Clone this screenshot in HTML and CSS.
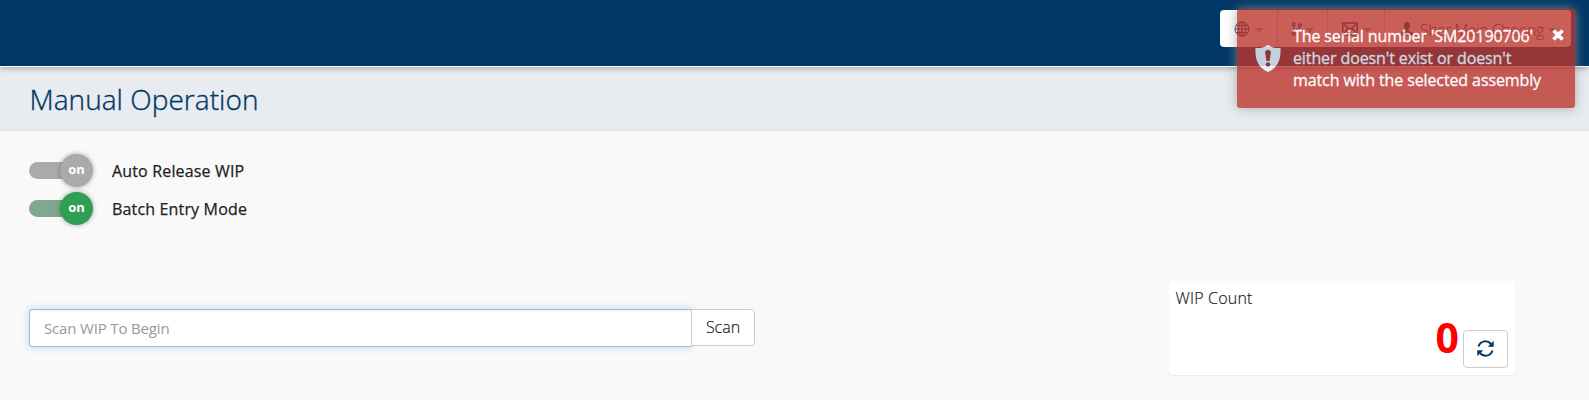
FILE: index.html
```html
<!DOCTYPE html>
<html lang="en">
<head>
<meta charset="utf-8">
<title>Manual Operation</title>
<link rel="stylesheet" href="styles.css">
</head>
<body>
<header class="topbar">
  <nav class="menu">
    <button class="menu-item globe"><svg width="16" height="16" viewBox="0 0 16 16" fill="none" stroke="currentColor" stroke-width="1"><circle cx="8" cy="8" r="7"/><ellipse cx="8" cy="8" rx="3.5" ry="7"/><path d="M8 1v14M1 8h14M2 4.5h12M2 11.5h12"/></svg><i class="caret"></i></button>
    <button class="menu-item branch"><svg width="12" height="14" viewBox="0 0 12 14" fill="none" stroke="currentColor" stroke-width="1.2"><circle cx="2.7" cy="2.3" r="1.4"/><circle cx="2.7" cy="11.7" r="1.4"/><circle cx="9" cy="3.3" r="1.4"/><path d="M2.700 4v6M9 5c0 3.500-6 1.500-6.300 5"/></svg><i class="caret"></i></button>
    <button class="menu-item mail"><svg width="16" height="14" viewBox="0 0 16 14" fill="none" stroke="currentColor" stroke-width="1.500"><rect x=".8" y="1" width="14.400" height="12"/><path d="M1 1.500l7 6 7-6M1 12.500l5-6M15 12.500l-5-6"/></svg><i class="caret"></i></button>
    <button class="menu-item user"><svg width="12" height="14" viewBox="0 0 12 14" fill="currentColor"><path d="M6 0C3.800 0 2.900 1.500 2.900 3.500c0 1.800.6 3.200 1.700 4v1.300L1.200 10.200C.4 10.600 0 11.500 0 13.500h12c0-2-.4-2.900-1.200-3.300L7.400 8.800V7.500c1.100-.8 1.700-2.200 1.700-4C9.100 1.500 8.200 0 6 0z"/></svg><span>Sher Mein Cheong</span><i class="caret"></i></button>
  </nav>
</header>
<div class="titlebar"><h1>Manual Operation</h1></div>
<main>
  <div class="switches">
    <label class="switch-row"><span class="switch disabled"><b>on</b></span><span>Auto Release WIP</span></label>
    <label class="switch-row"><span class="switch"><b>on</b></span><span>Batch Entry Mode</span></label>
  </div>
  <section class="work">
    <form class="scan"><input type="text" placeholder="Scan WIP To Begin"><button type="button">Scan</button></form>
    <div class="card">
      <div class="card-title">WIP Count</div>
      <div class="card-value"><strong>0</strong><button class="refresh" aria-label="Refresh"><svg width="17" height="17" viewBox="0 0 17 17"><g fill="none" stroke="currentColor" stroke-width="2"><path d="M1.500 6.500C3.500 0.500 10.500-.3 14 4"/><path d="M15.500 10.500C13.500 16.500 6.500 17.300 3 13"/></g><path fill="currentColor" d="M16.700.8v5.900h-5.900zM.3 16.200v-5.900h5.900z"/></svg></button></div>
    </div>
  </section>
</main>
<aside class="toast" role="alert">
  <svg class="shield" width="26" height="27" viewBox="0 0 26 27"><path fill="#f3f9fb" d="M13 0c3.500 2.500 7 3.300 12.500 3C26 13 24 22 13 27 2 22 0 13 .5 3 6 3.300 9.500 2.500 13 0z"/><path fill="#b03430" d="M10 6.500Q13 3 16 6.500L14.600 16h-3.200z"/><circle cx="13" cy="19.500" r="2.200" fill="#b03430"/></svg>
  <p>The serial number 'SM20190706' either doesn't exist or doesn't match with the selected assembly</p>
  <svg class="close" width="12" height="12" viewBox="0 0 12 12" stroke="#fff" stroke-width="3.800"><path d="M1.500 1.500l9 9M10.500 1.500l-9 9"/></svg>
</aside>
</body>
</html>
```
FILE: styles.css
```css
* { box-sizing: border-box; }
body { margin: 0; height: 400px; overflow: hidden; background: #f9f9f9; color: #222; font: 16px/22px "Open Sans", sans-serif; }
button { font: inherit; color: inherit; margin: 0; }
.topbar { height: 66px; background: #003764; padding: 10px 18px 0 0; display: flex; justify-content: flex-end; position: relative; box-shadow: 0 1px 0 #fff, 0 2px 6px rgba(0,0,0,.35); }
.menu { display: flex; width: 351px; height: 37px; background: #fff; border-radius: 4px; overflow: hidden; color: #003764; }
.menu-item { display: flex; align-items: center; border: 0; border-right: 1px solid #ccc; background: none; padding: 0; }
.menu-item:last-child { border: 0; flex: 1; }
.globe { width: 58px; padding-left: 14px; gap: 5px; }
.branch { width: 50px; padding-left: 13px; gap: 3px; }
.mail { width: 57px; padding-left: 14px; gap: 5px; }
.user { padding-left: 16px; gap: 7px; font-weight: 300; color: #222; white-space: nowrap; }
.user span { letter-spacing: -.55px; padding-top: 2px; }
.user svg { color: #003764; }
.user .caret { margin-left: -3px; }
.caret { border: 4px solid transparent; border-top: 5px solid #999; border-bottom: 0; margin-top: 3px; }
.titlebar { height: 65px; background: #e8ebf0; border-bottom: 1px solid #d9dee8; padding: 13px 29.500px; }
h1 { margin: 0; font-size: 28px; line-height: 40px; font-weight: 320; color: #003764; letter-spacing: .04px; -webkit-text-stroke: .35px #003764; }
.switches { padding: 20px 29px 0; }
.switch-row { display: flex; align-items: center; height: 38px; font-weight: 500; }
.switch-row > span:last-child { letter-spacing: .16px; padding-top: 2px; -webkit-text-stroke: .25px #222; }
.switch { width: 64px; height: 17px; margin-right: 19px; border-radius: 9px; background: linear-gradient(90deg, #80a88e 55px, transparent 55px); display: flex; align-items: center; justify-content: flex-end; }
.switch b { width: 33px; height: 33px; margin: -8px 0; border-radius: 50%; background: #319f53; color: #fff; font-size: 13px; line-height: 31px; text-align: center; box-shadow: 0 0 5px rgba(0,0,0,.35); }
.disabled { background: linear-gradient(90deg, #aaa 55px, transparent 55px); }
.disabled b { background: #aaa; }
.work { display: flex; justify-content: space-between; align-items: flex-start; padding: 54px 74px 0 29px; }
.scan { display: flex; align-items: flex-start; margin-top: 28px; width: 726px; }
.scan input { width: 663px; height: 38px; padding: 0 14px 1px; border: 1px solid #a0bcda; border-right: 0; border-radius: 4px 0 0 4px; background: #fff; font: 15px "Open Sans", sans-serif; letter-spacing: -.16px; box-shadow: inset 0 1px 2px rgba(0,0,0,.06), 0 0 8px rgba(102,160,225,.4); outline: 0; }
.scan input::placeholder { color: #999; opacity: 1; }
.scan button { width: 64px; height: 37px; margin-left: -1px; position: relative; border: 1px solid #ccc; border-radius: 0 4px 4px 0; background: #fff; padding: 0 0 2px; font-weight: 350; -webkit-text-stroke: .2px #222; }
.card { width: 346px; height: 94px; background: #fff; border-radius: 4px; padding: 6px 7px 7px; box-shadow: 0 1px 1px rgba(0,0,0,.06); display: flex; flex-direction: column; justify-content: space-between; }
.card-title { font-weight: 350; letter-spacing: .2px; margin-left: -.5px; -webkit-text-stroke: .2px #222; }
.card-value { display: flex; justify-content: flex-end; align-items: flex-end; gap: 4px; height: 59px; }
.card-value strong { color: red; font-size: 41px; line-height: 56px; padding-bottom: 3px; }
.refresh { width: 45px; height: 38px; border: 1px solid #ccc; border-radius: 4px; background: #fff; color: #003764; padding: 0 0 1px; display: grid; place-items: center; }
.toast { position: absolute; top: 9px; right: 14px; width: 338px; height: 99px; padding: 16px 11px 0 18px; display: flex; align-items: flex-start; background: #bd362f; color: #fff; opacity: .8; border-radius: 3px; box-shadow: 0 0 12px #999; }
.toast p { margin: 0 0 0 12px; width: 254px; flex: none; font-weight: 500; letter-spacing: -.11px; -webkit-text-stroke: .3px #fff; }
.shield { margin-top: 20px; flex: none; }
.close { margin: 4px 0 0 auto; flex: none; }
```
